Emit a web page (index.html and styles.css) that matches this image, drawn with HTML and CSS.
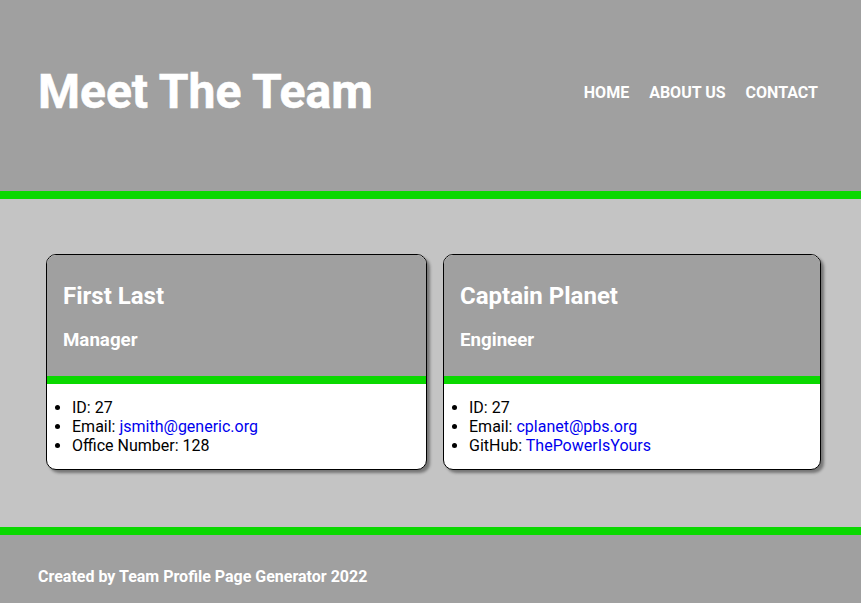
FILE: index.html
```html
<!DOCTYPE html>
<html lang="en">
<head>
<meta charset="UTF-8">
<title>Meet The Team</title>
<link rel="stylesheet" href="styles.css">
</head>
<body>
<header class="site-header">
  <h1 class="site-title">Meet The Team</h1>
  <nav class="site-nav">
    <a href="#">HOME</a>
    <a href="#">ABOUT US</a>
    <a href="#">CONTACT</a>
  </nav>
</header>
<main class="team">
  <section class="card">
    <div class="card-header">
      <h2 class="card-name">First Last</h2>
      <h3 class="card-role">Manager</h3>
    </div>
    <ul class="card-body">
      <li>ID: 27</li>
      <li>Email: <a href="#">jsmith@generic.org</a></li>
      <li>Office Number: 128</li>
    </ul>
  </section>
  <section class="card">
    <div class="card-header">
      <h2 class="card-name">Captain Planet</h2>
      <h3 class="card-role">Engineer</h3>
    </div>
    <ul class="card-body">
      <li>ID: 27</li>
      <li>Email: <a href="#">cplanet@pbs.org</a></li>
      <li>GitHub: <a href="#">ThePowerIsYours</a></li>
    </ul>
  </section>
</main>
<footer class="site-footer">
  <p>Created by Team Profile Page Generator 2022</p>
</footer>
</body>
</html>
```
FILE: styles.css
```css
html, body {
  margin: 0;
  padding: 0;
}
body {
  font-family: Roboto, "Liberation Sans", sans-serif;
  background: #c4c4c4;
  color: #000;
}
.site-header {
  height: 185px;
  background: #a0a0a0;
  border-bottom: 8px solid #0ad800;
  display: flex;
  align-items: center;
  justify-content: space-between;
  padding: 0 43px 6px 38px;
}
.site-title {
  margin: 0;
  font-size: 48px;
  font-weight: 700;
  color: #fff;
  line-height: 1.17;
  -webkit-text-stroke: 0.6px #fff;
}
.site-nav {
  display: flex;
  gap: 20px;
}
.site-nav a {
  color: #fff;
  font-weight: 700;
  font-size: 16px;
  text-decoration: none;
}
.team {
  display: grid;
  grid-template-columns: 381px 378px;
  column-gap: 16px;
  align-items: start;
  padding: 55px 40px 57px 46px;
}
.card {
  background: #fff;
  border: 1px solid #000;
  border-radius: 10px;
  overflow: hidden;
  box-shadow: 3px 3px 3px rgba(0, 0, 0, 0.4);
}
.card-header {
  background: #a0a0a0;
  color: #fff;
  padding: 27px 16px 25px;
  border-bottom: 8px solid #0ad800;
}
.card-name {
  margin: 0 0 19px;
  font-size: 24px;
  font-weight: 700;
}
.card-role {
  margin: 0;
  font-size: 18.72px;
  font-weight: 700;
}
.card-body {
  margin: 14px 0;
  padding-left: 25px;
  font-size: 16px;
}
.card-body a {
  color: #0000ee;
  text-decoration: none;
}
.site-footer {
  background: #a0a0a0;
  border-top: 8px solid #0ad800;
  padding: 32px 38px 30px;
  color: #fff;
}
.site-footer p {
  margin: 0;
  font-weight: 700;
  font-size: 16px;
}
```
